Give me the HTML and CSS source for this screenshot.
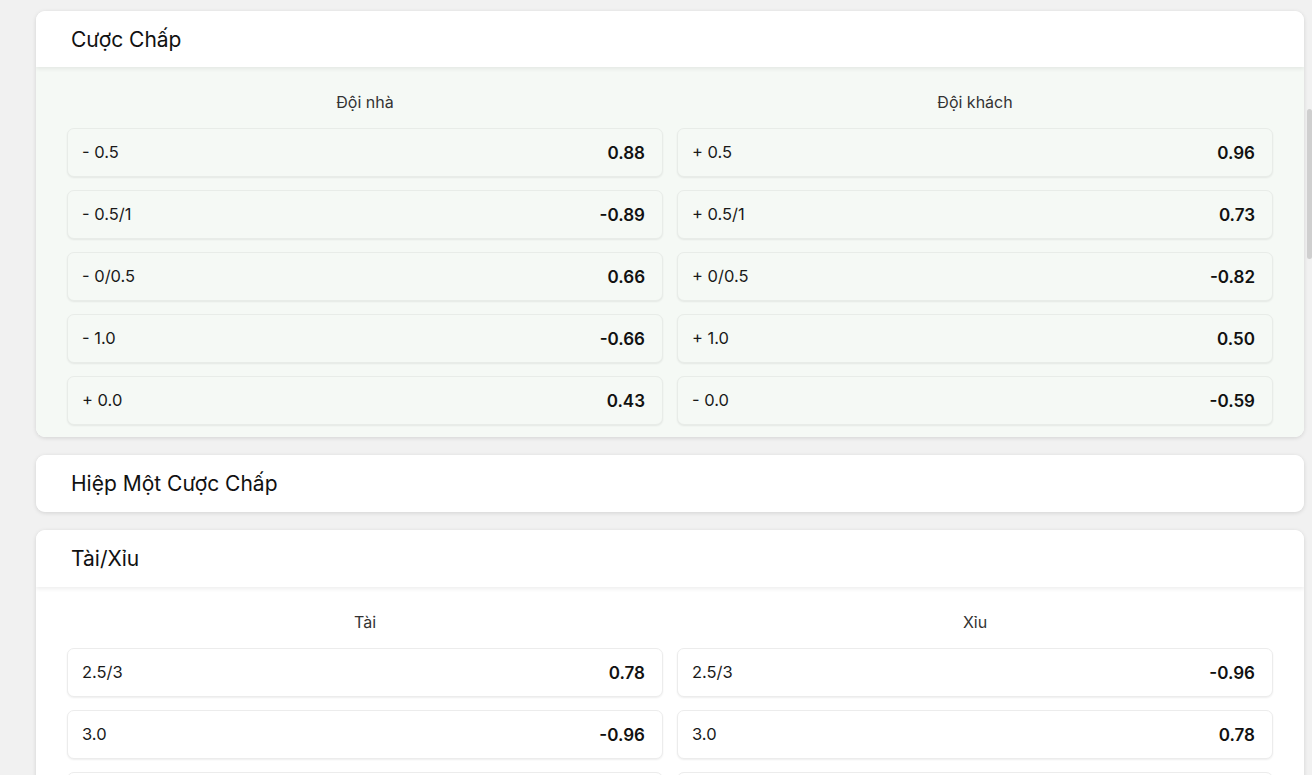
FILE: index.html
```html
<!DOCTYPE html>
<html lang="vi">
<head>
  <meta charset="UTF-8">
  <meta name="viewport" content="width=device-width, initial-scale=1.0">
  <title>Kèo cược</title>
  <link rel="stylesheet" href="styles.css">
</head>
<body>
  <div class="market-list">

    <section class="market">
      <div class="market-head">Cược Chấp</div>
      <div class="market-body green">
        <div class="side">
          <div class="side-title">Đội nhà</div>
          <div class="odd"><span class="line">- 0.5</span><span class="price">0.88</span></div>
          <div class="odd"><span class="line">- 0.5/1</span><span class="price">-0.89</span></div>
          <div class="odd"><span class="line">- 0/0.5</span><span class="price">0.66</span></div>
          <div class="odd"><span class="line">- 1.0</span><span class="price">-0.66</span></div>
          <div class="odd"><span class="line">+ 0.0</span><span class="price">0.43</span></div>
        </div>
        <div class="side">
          <div class="side-title">Đội khách</div>
          <div class="odd"><span class="line">+ 0.5</span><span class="price">0.96</span></div>
          <div class="odd"><span class="line">+ 0.5/1</span><span class="price">0.73</span></div>
          <div class="odd"><span class="line">+ 0/0.5</span><span class="price">-0.82</span></div>
          <div class="odd"><span class="line">+ 1.0</span><span class="price">0.50</span></div>
          <div class="odd"><span class="line">- 0.0</span><span class="price">-0.59</span></div>
        </div>
      </div>
    </section>

    <section class="market">
      <div class="market-head">Hiệp Một Cược Chấp</div>
    </section>

    <section class="market">
      <div class="market-head">Tài/Xỉu</div>
      <div class="market-body">
        <div class="side">
          <div class="side-title">Tài</div>
          <div class="odd"><span class="line">2.5/3</span><span class="price">0.78</span></div>
          <div class="odd"><span class="line">3.0</span><span class="price">-0.96</span></div>
          <div class="odd"><span class="line">2.5</span><span class="price">0.60</span></div>
          <div class="odd"><span class="line">3/3.5</span><span class="price">-0.80</span></div>
        </div>
        <div class="side">
          <div class="side-title">Xỉu</div>
          <div class="odd"><span class="line">2.5/3</span><span class="price">-0.96</span></div>
          <div class="odd"><span class="line">3.0</span><span class="price">0.78</span></div>
          <div class="odd"><span class="line">2.5</span><span class="price">-0.76</span></div>
          <div class="odd"><span class="line">3/3.5</span><span class="price">0.62</span></div>
        </div>
      </div>
    </section>

  </div>
  <div class="scroll-thumb"></div>
</body>
</html>
```

FILE: styles.css
```css
html {
  overflow: hidden;
}
body {
  margin: 0;
  background: #f1f1f1;
  font-family: Inter, 'Noto Sans', sans-serif;
  color: #1a1a1a;
}
.market-list {
  padding: 11px 8px 40px 36px;
  display: flex;
  flex-direction: column;
  gap: 18px;
}
.market {
  background: #fff;
  border-radius: 9px;
  box-shadow: 0 1px 4px rgba(0,0,0,0.13);
  overflow: hidden;
}
.market-head {
  height: 57px;
  display: flex;
  align-items: center;
  padding: 0 35px;
  font-size: 21px;
  color: #111;
  background: #fff;
  position: relative;
  box-shadow: 0 2px 4px rgba(0,0,0,0.07);
}
.market:first-child .market-head {
  height: 56px;
}
.market-body {
  display: grid;
  grid-template-columns: 1fr 1fr;
  column-gap: 14px;
  padding: 25px 31px 12px;
}
.market-body.green {
  background: #f5f9f5;
}
.side {
  display: flex;
  flex-direction: column;
  gap: 13px;
}
.side-title {
  text-align: center;
  font-size: 16px;
  line-height: 20px;
  color: #333;
  margin-bottom: 3px;
}
.odd {
  height: 49px;
  box-sizing: border-box;
  display: flex;
  align-items: center;
  justify-content: space-between;
  padding: 0 17px 0 14px;
  background: #fff;
  border: 1px solid #ececec;
  border-radius: 7px;
  box-shadow: 0 1px 2px rgba(0,0,0,0.07);
}
.green .odd {
  background: #f5f9f5;
  border-color: #e8ece8;
}
.line {
  font-size: 16.5px;
  color: #1a1a1a;
  margin-top: -2px;
}
.price {
  font-size: 17px;
  font-weight: 600;
  color: #111;
}
.scroll-thumb {
  position: fixed;
  top: 109px;
  right: 0;
  width: 5px;
  height: 150px;
  border-radius: 3px;
  background: #cfcfcf;
}
```
